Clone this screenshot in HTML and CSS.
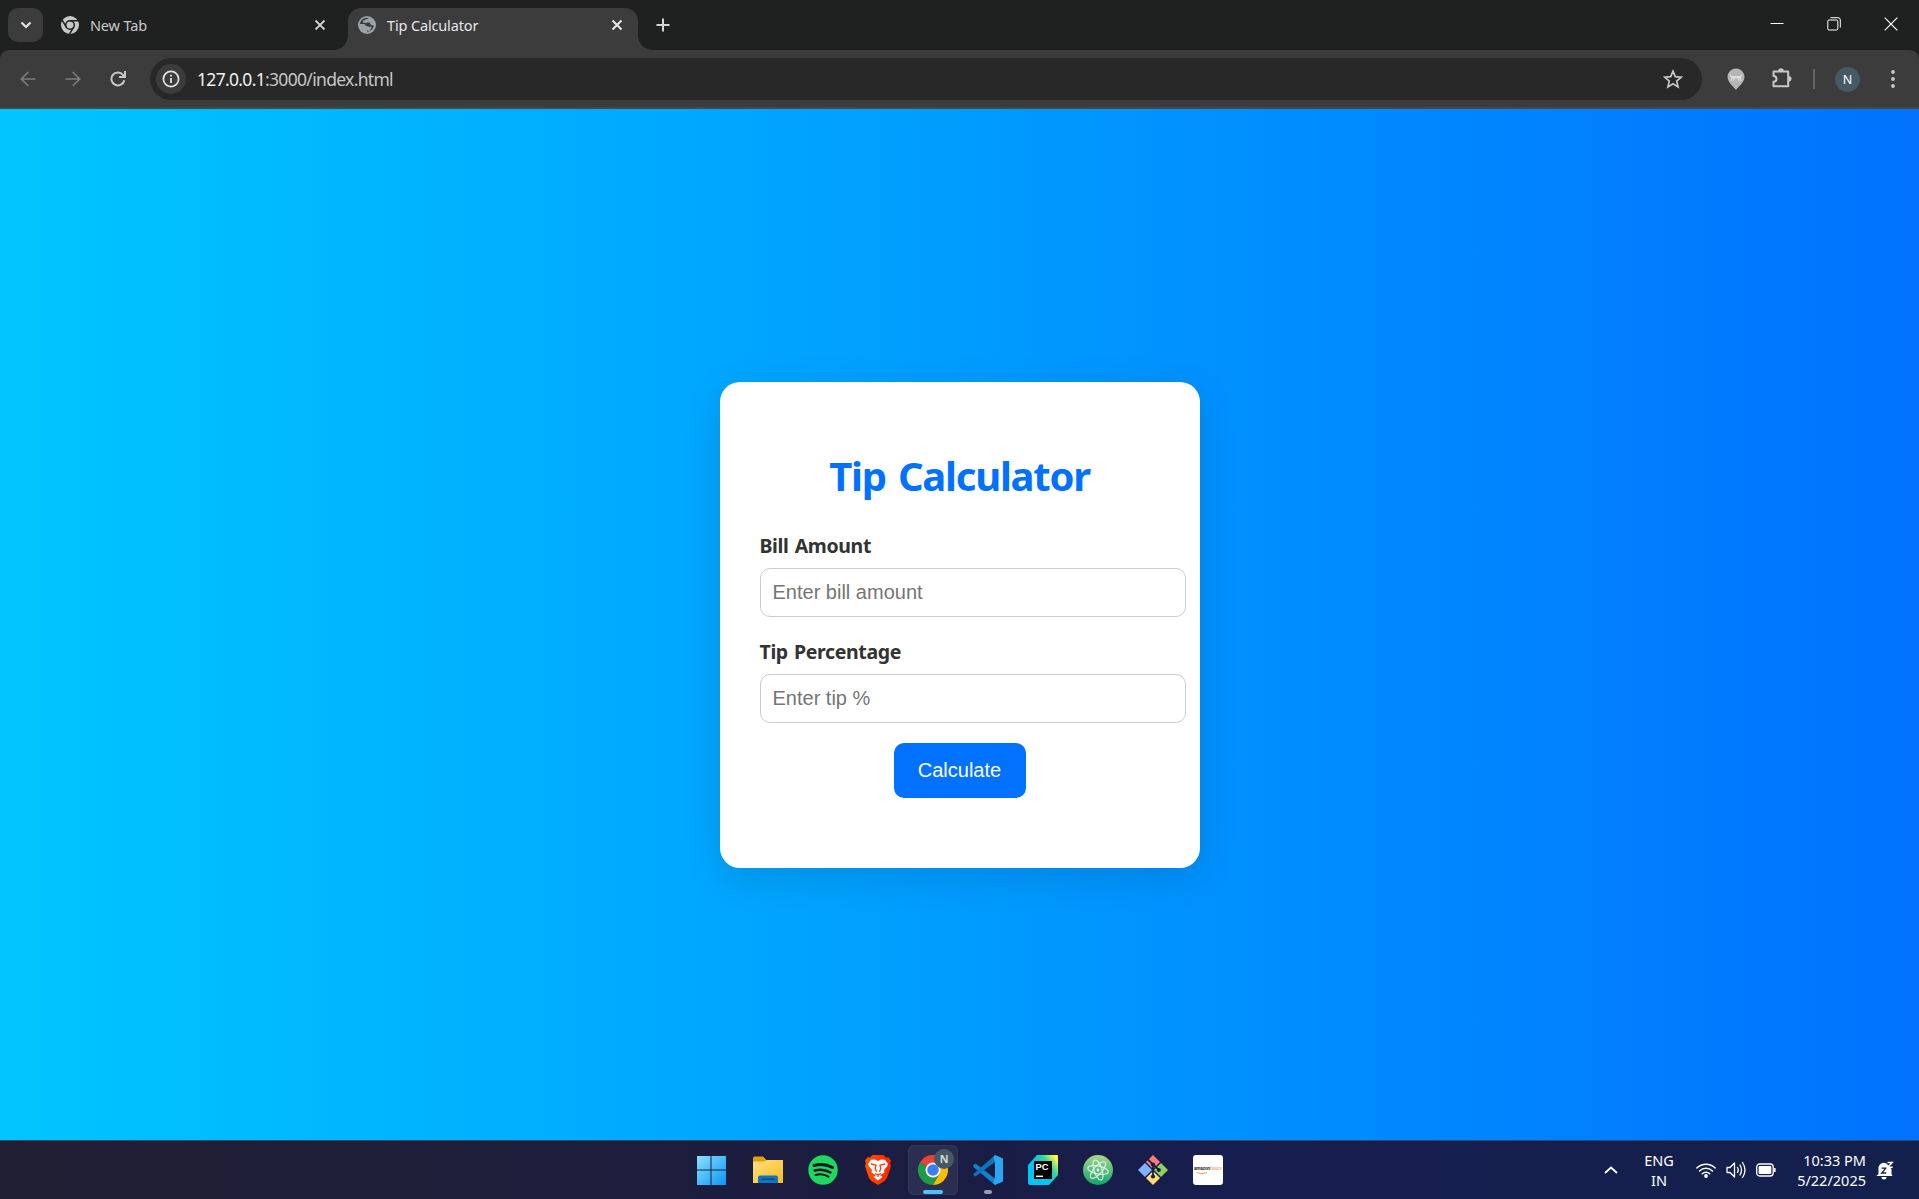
FILE: index.html
```html
<!DOCTYPE html>
<html lang="en">
<head>
<meta charset="utf-8">
<title>Tip Calculator</title>
<link rel="stylesheet" href="styles.css">
</head>
<body>
<div class="desktop">
  <header class="tabstrip">
    <div class="tab-search"><svg width="12" height="8" viewBox="0 0 12 8"><path d="M1.5 1.5 6 6l4.500-4.500" fill="none" stroke="#e3e3e3" stroke-width="2.200"/></svg></div>
    <div class="tab">
      <svg width="18" height="18" viewBox="0 0 18 18"><circle cx="9" cy="9" r="9" fill="#c7c7c7"/><g stroke="#1f2020" stroke-width="1.500" fill="none"><circle cx="9" cy="9" r="4.300"/><path d="M9 4.700h8.500M5.300 11.200 1 3.800M12.700 11.200 8.500 18"/></g></svg>
      <span class="tab-title new-tab">New Tab</span>
      <svg class="tab-close" width="12" height="12" viewBox="0 0 12 12"><path d="m1.500 1.500 9 9m0-9-9 9" stroke="#d0d0d0" stroke-width="1.800"/></svg>
    </div>
    <div class="tab active">
      <svg width="18" height="18" viewBox="0 0 18 18"><circle cx="9" cy="9" r="9" fill="#9aa0a6"/><path d="M10.800 2C9.500 3.200 8 3.300 8 4.800L9.200 6.500h2.300L13 9l2.800.8c-.7 3-3 5.500-6.300 6.200L9 14l2.500-1-.5-2.500-3-.6L6.500 8H2C2.500 4.500 5 2 9 1.800z" fill="#3c3c3c"/><path d="M5 4.800 8.500 3l3 .5-1 2.500-2.500 1L5 6.500zM9.500 12l3-1.500 1 1-2 3.500h-2z" fill="#9aa0a6"/></svg>
      <span class="tab-title active-title">Tip Calculator</span>
      <svg class="tab-close" width="12" height="12" viewBox="0 0 12 12"><path d="m1.500 1.500 9 9m0-9-9 9" stroke="#e8e8e8" stroke-width="2"/></svg>
    </div>
    <svg class="new-tab-plus" width="14" height="14" viewBox="0 0 14 14"><path d="M7 .5v13M.5 7h13" stroke="#d5d5d5" stroke-width="2"/></svg>
    <div class="window-controls">
      <svg width="14" height="14" viewBox="0 0 14 14"><path d="M.5 6.500h13" stroke="#fff"/></svg>
      <svg width="14" height="14" viewBox="0 0 14 14" fill="none" stroke="#fff"><rect x=".8" y="3" width="10" height="10" rx="1.200"/><path d="M3.500.7h7.500a2.300 2.300 0 0 1 2.300 2.300v7.500"/></svg>
      <svg width="14" height="14" viewBox="0 0 14 14"><path d="m.7.7 12.600 12.600m0-12.600L.7 13.300" stroke="#fff" stroke-width="1.200"/></svg>
    </div>
  </header>
  <nav class="toolbar">
    <div class="nav-icons">
      <svg width="16" height="16" viewBox="0 0 16 16" fill="none" stroke="#7c7c7c" stroke-width="1.700"><path d="M15.500 8H1.500M8.300 1 1.300 8l7 7"/></svg>
      <svg width="16" height="16" viewBox="0 0 16 16" fill="none" stroke="#7c7c7c" stroke-width="1.700"><path d="M.5 8h14M7.700 1l7 7-7 7"/></svg>
      <svg width="16" height="16" viewBox="0 0 16 16" fill="none" stroke="#c7c7c7" stroke-width="2"><path d="M14.300 9.200A6.500 6.500 0 1 1 13 3.800l1.300 1.400M15 0v6H9"/></svg>
    </div>
    <div class="omnibox">
      <div class="site-info"><svg width="18" height="18" viewBox="0 0 18 18"><circle cx="9" cy="9" r="7.600" fill="none" stroke="#e3e3e3" stroke-width="1.700"/><path d="M9 8v5M9 4.800v1.800" stroke="#e3e3e3" stroke-width="1.800"/></svg></div>
      <span class="url">127.0.0.1<span class="url-path">:3000/index.html</span></span>
      <svg class="star" width="20" height="20" viewBox="0 0 20 20"><path d="m10 2.200 2.300 5.500 5.900.5-4.500 3.900 1.400 5.800L10 14.800l-5.100 3.100 1.400-5.800-4.500-3.900 5.900-.5z" fill="none" stroke="#c7c7c7" stroke-width="1.700"/></svg>
    </div>
    <div class="toolbar-actions">
      <svg width="18" height="22" viewBox="0 0 18 22"><path d="M9 22 C6 18 .5 14 .5 9a8.500 8.500 0 0 1 17 0c0 5-5.500 9-8.500 13z" fill="#b5b5b5"/><path d="m3.200 6 .6 2.500h9.500l1.500-1.500M5 9l-.8 4M7.300 9.500 6.500 13M11 9.500l1 3.500M13 9l1 4" fill="none" stroke="#dedede" stroke-width="1.100"/><path d="M4.500 8h9.500v2.500H4.500z" fill="#dedede"/></svg>
      <svg width="22" height="22" viewBox="0 0 22 22"><path d="M2.500 3.500h14.700v14.800H2.500v-4.500c4-.2 4-5.600 0-5.800z" fill="none" stroke="#c7c7c7" stroke-width="2" stroke-linejoin="round"/><path d="M7.200 3a2.800 2.800 0 0 1 5.600 0zM17.700 8a2.800 2.800 0 0 1 0 5.600z" fill="#c7c7c7"/></svg>
      <i class="divider"></i>
      <span class="avatar">N</span>
      <svg width="4" height="18" viewBox="0 0 4 18" fill="#c7c7c7"><circle cx="2" cy="2" r="1.900"/><circle cx="2" cy="9" r="1.900"/><circle cx="2" cy="16" r="1.900"/></svg>
    </div>
  </nav>

  <main class="page">
    <section class="card">
      <h1>Tip Calculator</h1>
      <label class="bill-label" for="bill">Bill Amount</label>
      <input id="bill" type="text" placeholder="Enter bill amount">
      <label class="tip-label" for="tip">Tip Percentage</label>
      <input id="tip" type="text" placeholder="Enter tip %">
      <button type="button">Calculate</button>
    </section>
  </main>

  <footer class="taskbar">
    <div class="apps">
      <div class="app start"><svg width="30" height="30" viewBox="0 0 30 30"><defs><linearGradient id="win" x2="1" y2="1"><stop stop-color="#8be0ff"/><stop offset="1" stop-color="#0b94f5"/></linearGradient></defs><path d="M1 1h13.500v13.500H1zM15.500 1H30v13.500H15.500zM1 15.500h13.500V30H1zM15.500 15.500H30V30H15.500z" fill="url(#win)"/></svg></div>
      <div class="app"><svg width="30" height="28" viewBox="0 0 30 28"><defs><linearGradient id="fold" x2="1" y2="1"><stop stop-color="#ffe083"/><stop offset="1" stop-color="#fbbc1b"/></linearGradient></defs><path d="M0 2a1.500 1.500 0 0 1 1.500-1.500H10l3.500 3.500H29v8H0z" fill="#dfa00c"/><path d="M0 5.500h11L14 4h16v23H0z" fill="url(#fold)"/><path d="M5 27v-5.500a2 2 0 0 1 2-2h16a2 2 0 0 1 2 2V27z" fill="#0f73c4"/><path d="M8.500 23.200h13" stroke="#073f77" stroke-width="1.200"/></svg></div>
      <div class="app"><svg width="30" height="30" viewBox="0 0 30 30"><circle cx="15" cy="15" r="14.700" fill="#1ed760"/><g fill="none" stroke="#101622" stroke-linecap="round"><path d="M6 10.500c6-1.700 13-1.100 18.500 2" stroke-width="3"/><path d="M6.700 15.500c5-1.400 11-.8 15.800 2" stroke-width="2.400"/><path d="M7.400 20c4.500-1.200 9.300-.6 13.100 1.700" stroke-width="2"/></g></svg></div>
      <div class="app"><svg width="26" height="30" viewBox="0 0 26 30"><defs><linearGradient id="brave" x2="1"><stop stop-color="#ff5500"/><stop offset="1" stop-color="#ff2000"/></linearGradient></defs><path d="M7.500 0h11l2.500 2.500 2.500-.3L26 5.500l-.9 3L26 11l-4 12-2.500 3L13 30l-6.500-4L4 23 0 11l.9-2.500L0 5.500l2.500-3.300 2.500.3z" fill="url(#brave)"/><path d="m13 6 3-1.500 4 .3 3 4.200-1 2.500-3 3.500.5 2.500-4.500 2.700L17.500 22 13 25.500 8.500 22l2.500-1.800-4.500-2.700.5-2.500-3-3.500L3 9l3-4.200 4-.3z" fill="#fff"/><path d="m6 9 5 1.200-.8 3.300 1.300 3.200M20 9l-5 1.200.8 3.300-1.300 3.200M10 18.500l3 1.400 3-1.400M13 20v2" fill="none" stroke="#ff3a00" stroke-width="1.300"/></svg></div>
      <div class="app current"><svg width="30" height="30" viewBox="0 0 30 30"><path d="M15 15 2 7.500A15 15 0 0 1 28 7.500z" fill="#ea4335"/><path d="M15 15 2 7.500A15 15 0 0 0 15 30l6.500-11.300z" fill="#229b48"/><path d="M15 15h-2L28 7.500A15 15 0 0 1 15 30l6.500-11.300z" fill="#fbbc04"/><path d="M15 7.500h13L15 15z" fill="#ea4335"/><circle cx="15" cy="15" r="7.500" fill="#fff"/><circle cx="15" cy="15" r="5.800" fill="#3c7df0"/></svg><span class="profile">N</span><i class="indicator"></i></div>
      <div class="app"><svg width="30" height="30" viewBox="0 0 30 30"><path d="M0 10.500 2.500 8.500 22 23.500V30L1 12.500z" fill="#0d83cf"/><path d="M0 19.500 22 0v7L2.500 21.500z" fill="#1173b8"/><path d="M22 0 30 3.500v23L22 30 20.500 28 22 22V8l-1.500-6z" fill="#2aa7f3"/></svg><i class="indicator idle"></i></div>
      <div class="app"><svg width="30" height="30" viewBox="0 0 30 30"><defs><linearGradient id="py" x1="0" y1=".75" x2="1" y2="0"><stop offset=".4" stop-color="#07c3f2"/><stop offset=".65" stop-color="#35d3a0"/><stop offset=".9" stop-color="#fcf84a"/></linearGradient></defs><path d="M9 0h20a1 1 0 0 1 1 1v19L21 30H2a2 2 0 0 1-2-2V10z" fill="url(#py)"/><path d="M6 6h18v18H6z" fill="#000"/><path d="M8 21.300h7" stroke="#fff" stroke-width="1.400"/><text class="pc" x="7.500" y="15" textLength="13" lengthAdjust="spacingAndGlyphs">PC</text></svg></div>
      <div class="app"><svg width="30" height="30" viewBox="0 0 30 30"><defs><linearGradient id="atom" x2="0" y2="1"><stop stop-color="#a8d68b"/><stop offset="1" stop-color="#0ba66c"/></linearGradient></defs><circle cx="15" cy="15" r="15" fill="url(#atom)"/><g fill="none" stroke="#e4f5e7" stroke-width="1.100"><ellipse cx="15" cy="15" rx="10.500" ry="4" transform="rotate(12 15 15)"/><ellipse cx="15" cy="15" rx="10.500" ry="4" transform="rotate(72 15 15)"/><ellipse cx="15" cy="15" rx="10.500" ry="4" transform="rotate(132 15 15)"/></g><circle cx="15" cy="15" r="1.500" fill="#fff"/></svg></div>
      <div class="app"><svg width="30" height="30" viewBox="0 0 30 30"><path d="m15 0 7 7-7 7-7-7z" fill="#f77c7c"/><path d="m7 8 7 7-7 7-7-7z" fill="#80b3ff"/><path d="m23 8 7 7-7 7-7-7z" fill="#8dd35f"/><path d="m15 16 7 7-7 7-7-7z" fill="#ffdc73"/><path d="m9.500 4 5.500 5.500V22M15 9.500l6 5.500" fill="none" stroke="#1b1d40" stroke-width="1.800"/><circle cx="15" cy="9.500" r="2.100" fill="#1b1d40"/><circle cx="20.800" cy="15" r="2.100" fill="#1b1d40"/><circle cx="15" cy="21.500" r="2.100" fill="#1b1d40"/></svg></div>
      <div class="app"><div class="amazon-tile"><span>amazon<span class="basics">basics</span></span><svg width="10" height="3" viewBox="0 0 10 3"><path d="M0 .5q5 2.500 10 0" fill="none" stroke="#f7a04b"/></svg></div></div>
    </div>
    <div class="tray">
      <svg class="chevron" width="14" height="8" viewBox="0 0 14 8"><path d="m1 7 6-5.500L13 7" fill="none" stroke="#fff" stroke-width="1.800"/></svg>
      <div class="language">ENG<br>IN</div>
      <div class="status">
        <svg width="20" height="16" viewBox="0 0 20 16"><g fill="none" stroke="#fff" stroke-width="1.400" stroke-linecap="round"><path d="M.8 6a13 13 0 0 1 18.400 0M3.500 9a9.200 9.200 0 0 1 13 0M6.200 11.800a5.400 5.400 0 0 1 7.600 0"/></g><circle cx="10" cy="14" r="1.900" fill="#fff"/></svg>
        <svg width="20" height="18" viewBox="0 0 20 18"><g fill="none" stroke="#fff" stroke-width="1.300" stroke-linecap="round" stroke-linejoin="round"><path d="M1 6.500h3L8.500 2v14L4 11.500H1zM11.500 6.500q1.500 2.500 0 5M14 4q3 5 0 10M16.500 1.500q5 7.500 0 15"/></g></svg>
        <svg width="20" height="14" viewBox="0 0 20 14"><rect x=".7" y="1" width="16.500" height="12" rx="3" fill="none" stroke="#fff" stroke-width="1.300"/><rect x="2.600" y="3" width="12.700" height="8" rx="1" fill="#fff"/><path d="M18.700 5v4" stroke="#fff" stroke-width="1.800"/></svg>
      </div>
      <div class="clock">10:33 PM<br>5/22/2025</div>
      <svg class="bell" width="18" height="19" viewBox="0 0 18 19"><path d="M2.500 8a5.500 5.500 0 0 1 8-5.500l5 5.500v5l1 2H.3l2.200-2zM5.500 16h5a2.500 2.500 0 0 1-5 0z" fill="#fff"/><path d="M5.500 7.200h4.200l-4 4.800h4.500" fill="none" stroke="#13204c" stroke-width="1.300"/><path d="M11.500 1.500h4.700l-4.500 4.800h5" fill="none" stroke="#fff" stroke-width="1.500"/></svg>
    </div>
  </footer>
</div>
</body>
</html>
```
FILE: styles.css
```css
* { box-sizing: border-box; }
body { margin: 0; overflow: hidden; font-family: "Noto Sans", "Open Sans", sans-serif; }
svg { display: block; flex: none; }
.desktop { display: flex; flex-direction: column; width: 1919px; height: 1199px; background: #1f2020; }

/* Browser tabs */
.tabstrip { display: flex; height: 50px; background: #1f2020; padding: 8px 21px 0 8px; }
.tab-search { width: 35px; height: 34px; border-radius: 10px; background: #3c3c3c; display: flex; align-items: center; justify-content: center; }
.tab { display: flex; align-items: center; width: 305px; height: 42px; padding: 0 22px 8px 18px; }
.tab.active { position: relative; width: 290px; padding: 0 15px 8px 10px; background: #3c3c3c; border-radius: 13px 13px 0 0; }
.tab.active::before, .tab.active::after { content: ""; position: absolute; bottom: 0; width: 14px; height: 14px; }
.tab.active::before { left: -14px; background: radial-gradient(circle at 0 0, transparent 13.500px, #3c3c3c 14px); }
.tab.active::after { right: -14px; background: radial-gradient(circle at 100% 0, transparent 13.500px, #3c3c3c 14px); }
.tab-title { margin-left: 11px; font-size: 14.500px; line-height: 20px; color: #c9c9c9; letter-spacing: -.15px; white-space: nowrap; }
.active-title { color: #e6e6e6; }
.tab-close { margin-left: auto; }
.new-tab-plus { margin: 10px 0 0 18px; }
.window-controls { display: flex; gap: 43px; margin: 9px 0 0 auto; }

/* Address bar */
.toolbar { display: flex; align-items: center; height: 59px; padding: 1px 24px 0 20px; background: #3c3c3c; border-radius: 9px 9px 0 0; border-bottom: 2px solid #474747; }
.nav-icons { display: flex; gap: 29px; width: 130px; }
.omnibox { display: flex; align-items: center; width: 1552px; height: 42px; padding: 0 19px 0 6px; border-radius: 21px; background: #282828; }
.site-info { display: flex; align-items: center; justify-content: center; width: 30px; height: 30px; border-radius: 50%; background: #3c3c3c; }
.url { margin-left: 11px; font-size: 17.500px; line-height: 24px; letter-spacing: -.68px; color: #f0f0f0; white-space: nowrap; }
.url-path { color: #c7c7c7; }
.star { margin-left: auto; }
.toolbar-actions { display: flex; align-items: center; margin-left: auto; }
.toolbar-actions > :nth-child(2) { margin-left: 26px; }
.divider { width: 2px; height: 20px; margin-left: 20px; background: #646464; }
.avatar { width: 25px; height: 25px; margin: 0 31px 0 20px; border-radius: 50%; background: #455a64; color: #fff; font-size: 12.500px; line-height: 25px; text-align: center; }

/* Page */
.page { display: flex; align-items: center; justify-content: center; height: 1031px; background: linear-gradient(to right, #00c6ff, #0072ff); }
.card { display: flex; flex-direction: column; width: 480px; height: 486px; padding: 67px 40px 0; border-radius: 20px; background: #fff; box-shadow: 0 10px 38px rgba(0, 0, 0, .12); }
h1 { margin: 0; color: #0072ff; font-size: 40px; line-height: 54px; letter-spacing: -1.250px; word-spacing: 3px; text-align: center; white-space: nowrap; }
label { color: #333; font-size: 19.500px; font-weight: 700; line-height: 26px; letter-spacing: -.36px; word-spacing: 1.500px; white-space: nowrap; }
.bill-label { margin: 30px 0 9px; }
.tip-label { margin: 22px 0 9px; }
input { width: 426px; height: 49px; padding: 0 12px; border: 1px solid #ccc; border-radius: 10px; background: #fff; font: 20px "Liberation Sans", Arial, sans-serif; }
input::placeholder { color: #757575; opacity: 1; }
button { align-self: center; width: 132px; height: 55px; margin-top: 20px; padding: 0; border: 0; border-radius: 10px; background: #0072ff; color: #fff; font: 20px "Liberation Sans", Arial, sans-serif; }

/* Taskbar */
.taskbar { display: flex; justify-content: space-between; height: 59px; padding: 4px 25px 0 686px; border-top: 1px solid #3a4468; background: linear-gradient(to right, #211f33, #1b1d40 45%, #161e50 65%, #13204c); color: #fff; }
.apps { display: flex; gap: 5px; }
.app { position: relative; display: flex; align-items: center; justify-content: center; width: 50px; height: 50px; }
.start { margin-right: 2px; }
.current { border-radius: 6px; background: #2b2e50; box-shadow: inset 0 0 0 1px #343759; }
.profile { position: absolute; left: 26px; top: 4px; width: 20px; height: 20px; border-radius: 50%; background: #455a64; color: #e0e0e0; font-size: 11px; font-weight: 600; line-height: 20px; text-align: center; }
.indicator { position: absolute; left: 15px; bottom: 1px; width: 20px; height: 4px; border-radius: 2px; background: #4cc2ff; }
.idle { left: 21px; width: 8px; background: #989ab0; }
.pc { font: 700 9.500px "Liberation Sans", sans-serif; fill: #fff; }
.amazon-tile { width: 30px; height: 30px; padding: 11px 0 0 1px; border-radius: 3px; background: #fff; color: #222; font: 700 4.700px/6px "Liberation Sans", sans-serif; letter-spacing: -.25px; white-space: nowrap; }
.amazon-tile > span { display: block; }
.amazon-tile svg { margin-left: 3px; }
.basics { font-weight: 400; color: #f39a5d; }
.tray { display: flex; align-items: center; height: 50px; font-size: 14.500px; line-height: 20px; white-space: nowrap; }
.language, .clock { padding-bottom: 1px; }
.language { margin-left: 25px; width: 32px; text-align: center; }
.status { display: flex; align-items: center; gap: 10px; margin-left: 21px; }
.clock { margin-left: 20px; width: 70px; text-align: right; }
.bell { margin-left: 10px; }
```
